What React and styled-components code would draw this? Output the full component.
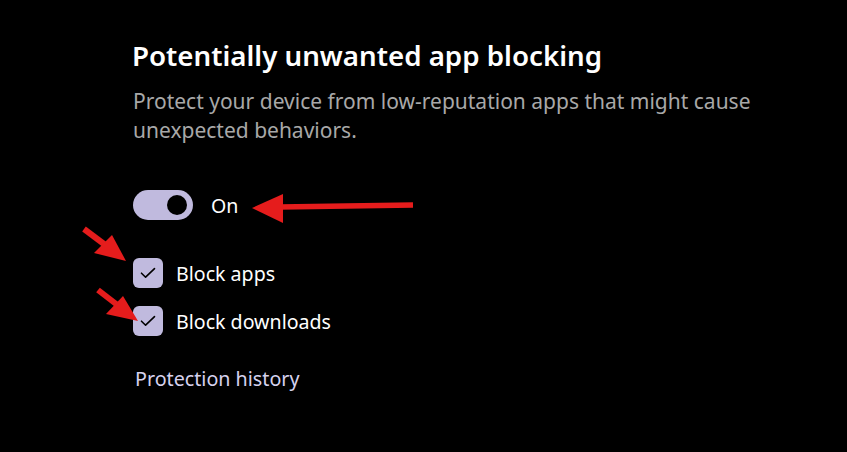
import React, { useState } from 'react';
import styled, { createGlobalStyle } from 'styled-components';

const GlobalStyle = createGlobalStyle`
  html, body {
    margin: 0;
    padding: 0;
    background: #000;
  }
  body {
    font-family: "Noto Sans", "Open Sans", sans-serif;
  }
`

const Page = styled.div`
  position: relative;
  width: 847px;
  height: 452px;
  background: #000;
  box-sizing: border-box;
  padding: 37px 0 0 132px;
  display: flex;
  flex-direction: column;
  align-items: flex-start;
  overflow: hidden;
`

const Title = styled.h2`
  margin: 0;
  font-size: 27.7px;
  font-weight: 600;
  line-height: 36px;
  color: #fff;
`

const Description = styled.p`
  margin: 13.5px 0 0 1px;
  width: 660px;
  font-size: 21px;
  line-height: 29px;
  color: #a8a8a8;
`

const ToggleRow = styled.div`
  display: flex;
  align-items: center;
  gap: 18px;
  margin-top: 45.5px;
  margin-left: 1px;
`

const Track = styled.button`
  position: relative;
  width: 60px;
  height: 30px;
  border: none;
  border-radius: 15px;
  padding: 0;
  background: ${p => (p.on ? '#c0bade' : '#333')};
  cursor: pointer;
`

const Knob = styled.span`
  position: absolute;
  top: 5px;
  left: ${p => (p.on ? '34px' : '6px')};
  width: 20px;
  height: 20px;
  border-radius: 50%;
  background: #000;
`

const Label = styled.span`
  font-size: 19.6px;
  line-height: 27px;
  color: #fff;
`

const Checks = styled.div`
  display: flex;
  flex-direction: column;
  gap: 18px;
  margin-top: 38px;
  margin-left: 1px;
`

const CheckRow = styled.label`
  display: flex;
  align-items: center;
  gap: 13px;
  cursor: pointer;
`

const Box = styled.span`
  width: 30px;
  height: 30px;
  border-radius: 6px;
  background: ${p => (p.checked ? '#c0bade' : 'transparent')};
  display: flex;
  align-items: center;
  justify-content: center;
`

const Link = styled.a`
  margin-top: 29px;
  margin-left: 3px;
  font-size: 19.7px;
  line-height: 27px;
  color: #d6d2ee;
  text-decoration: none;
`

const Overlay = styled.svg`
  position: absolute;
  left: 0;
  top: 0;
  pointer-events: none;
`

function Check({ label, checked, onToggle }) {
  return (
    <CheckRow onClick={onToggle}>
      <Box checked={checked}>
        {checked && (
          <svg width="16" height="12" viewBox="0 0 16 12">
            <path d="M1.5 6.2 L5.6 10.2 L14.5 1.6" fill="none" stroke="#000" strokeWidth="1.6" strokeLinecap="round" strokeLinejoin="round" />
          </svg>
        )}
      </Box>
      <Label>{label}</Label>
    </CheckRow>
  )
}

export default function App() {
  const [on, setOn] = useState(true)
  const [apps, setApps] = useState(true)
  const [downloads, setDownloads] = useState(true)

  return (
    <Page>
      <GlobalStyle />
      <Title>Potentially unwanted app blocking</Title>
      <Description>
        Protect your device from low-reputation apps that might cause unexpected behaviors.
      </Description>
      <ToggleRow>
        <Track on={on ? 1 : 0} onClick={() => setOn(!on)}>
          <Knob on={on ? 1 : 0} />
        </Track>
        <Label>{on ? 'On' : 'Off'}</Label>
      </ToggleRow>
      <Checks>
        <Check label="Block apps" checked={apps} onToggle={() => setApps(!apps)} />
        <Check label="Block downloads" checked={downloads} onToggle={() => setDownloads(!downloads)} />
      </Checks>
      <Link href="#">Protection history</Link>

      {/* red annotation arrows */}
      <Overlay width="847" height="452">
        <line x1="413" y1="205" x2="280" y2="207" stroke="#e51c1c" strokeWidth="5.5" />
        <polygon points="252,208 283,194 283,223" fill="#e51c1c" />
        <line x1="84" y1="229" x2="108" y2="247" stroke="#e51c1c" strokeWidth="6" />
        <polygon points="126,261 94,253 112,235" fill="#e51c1c" />
        <line x1="98" y1="290" x2="120" y2="307" stroke="#e51c1c" strokeWidth="6" />
        <polygon points="138,321 106,314 123,296" fill="#e51c1c" />
      </Overlay>
    </Page>
  )
}
